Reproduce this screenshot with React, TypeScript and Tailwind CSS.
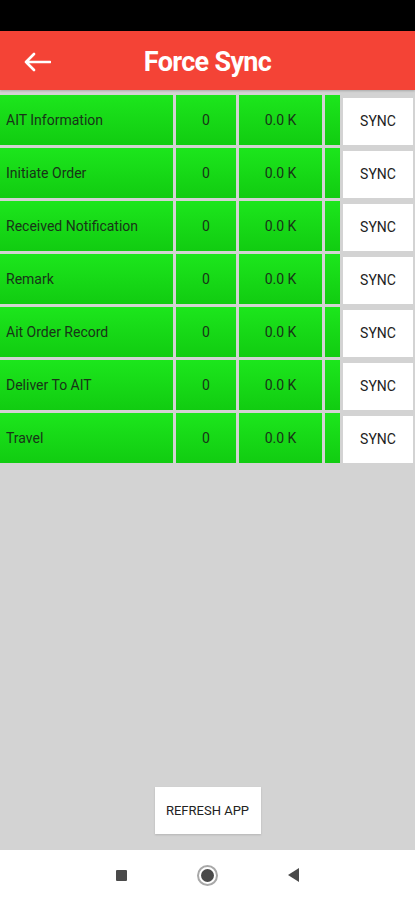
import React from "react";

const rows = [
  "AIT Information",
  "Initiate Order",
  "Received Notification",
  "Remark",
  "Ait Order Record",
  "Deliver To AIT",
  "Travel",
];

const cell = "bg-gradient-to-b from-[#1ce61c] to-[#11cc11] flex items-center text-[14px] text-[#183418]";

export default function App() {
  return (
    <div className="h-[900px] w-[415px] flex flex-col bg-[#d3d3d3] font-['Roboto',sans-serif]">
      <div className="h-[31px] bg-black" />

      <header className="h-[59px] bg-[#f44336] flex items-center relative shadow-[0_1px_2px_rgba(0,0,0,0.2)]">
        <svg className="absolute left-[24px] top-[21px]" width="27" height="20" viewBox="0 0 27 20" fill="none">
          <path d="M10 2 L2 10 L10 18 M2 10 H26" stroke="white" strokeWidth="2.6" strokeLinecap="round" strokeLinejoin="round" />
        </svg>
        <h1 className="w-full text-center text-white font-bold text-[27px] pt-[4px] tracking-tight">Force Sync</h1>
      </header>

      <main className="flex-1 flex flex-col pt-[5px]">
        <div className="flex flex-col gap-[3px]">
          {rows.map((name) => (
            <div key={name} className="grid grid-cols-[173px_60px_83px_15px_70px] gap-[3px] h-[50px]">
              <div className={`${cell} pl-[6px]`}>{name}</div>
              <div className={`${cell} justify-center`}>0</div>
              <div className={`${cell} justify-center`}>0.0 K</div>
              <div className={cell} />
              <div className="mt-[3px] h-[47px] bg-white flex items-center justify-center text-[14px] text-[#222]">
                SYNC
              </div>
            </div>
          ))}
        </div>

        <div className="mt-auto mb-[16px] flex justify-center">
          <button className="w-[106px] h-[47px] bg-white text-[13px] text-[#222] shadow-[0_1px_2px_rgba(0,0,0,0.15)]">
            REFRESH APP
          </button>
        </div>
      </main>

      <nav className="h-[50px] bg-white flex items-center justify-center gap-[70px]">
        <div className="w-[11px] h-[11px] bg-[#4a4a4a] rounded-[1px]" />
        <div className="w-[21px] h-[21px] rounded-full border-[2px] border-[#a8a8a8] flex items-center justify-center">
          <div className="w-[13px] h-[13px] rounded-full bg-[#4a4a4a]" />
        </div>
        <svg width="11" height="14" viewBox="0 0 11 14">
          <path d="M11 0 L0 7 L11 14 Z" fill="#4a4a4a" />
        </svg>
      </nav>
    </div>
  );
}
